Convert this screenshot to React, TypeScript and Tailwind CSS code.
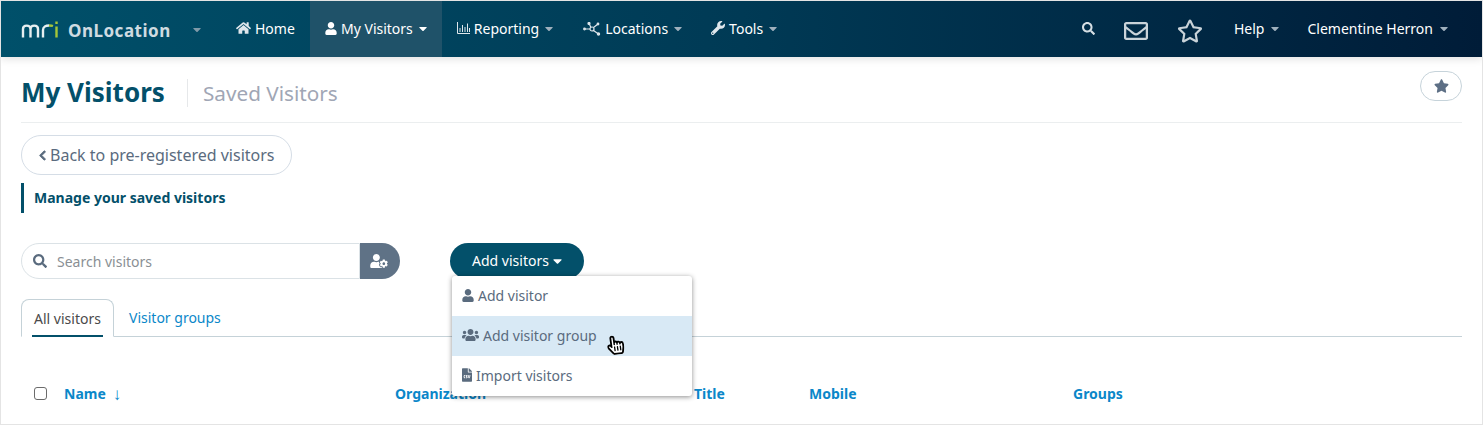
import { FaCaretDown, FaChevronLeft, FaFileCsv, FaHandPointer, FaHome, FaRegEnvelope, FaRegHandPointer, FaRegStar, FaSearch, FaStar, FaUser, FaUserCog, FaUsers, FaWrench } from "react-icons/fa";
import type { ReactNode } from "react";

function Caret({ className = "" }: { className?: string }) {
  return <FaCaretDown className={`h-[13px] w-[8px] ${className}`} />;
}

function MriLogo() {
  return (
    <svg width="38" height="17" viewBox="0 0 38 17" fill="none" strokeWidth="2.400">
      <path d="M2 16.500V8C2 3.500 9.500 3.500 9.500 8V16.500M9.500 8C9.500 3.500 17 3.500 17 8V16.500" stroke="#e6eef0" />
      <path d="M22 16.500V9C22 5.500 25 4.500 28 4.500" stroke="#e6eef0" />
      <path d="M28 4.500C30 4.500 31 4.600 32 5" stroke="#a4c639" />
      <path d="M35.500 5.500V16.500M35.500 .5V3" stroke="#a4c639" />
    </svg>
  );
}

function ChartIcon() {
  return (
    <svg width="13" height="12" viewBox="0 0 13 12" fill="none" stroke="#dfe7ec" strokeWidth="1">
      <path d="M.5 0v11.500H13" />
      <path d="M3 10V6M5.500 10V3M8 10V5M10.500 10V1.500M12.500 10V6" />
    </svg>
  );
}

function HubIcon() {
  return (
    <svg width="18" height="14" viewBox="0 0 18 14" fill="#dfe7ec" stroke="#dfe7ec" strokeWidth="1.200" className="mt-[1px]">
      <path d="M2 7h5M6 1.500l2 4M15 2l-4.500 3.500M15.500 12l-5-3.500" />
      <circle cx="1.500" cy="7" r=".8" />
      <circle cx="6" cy="1.500" r="1" />
      <circle cx="15" cy="2" r=".8" />
      <circle cx="15.500" cy="12" r="1.100" />
      <circle cx="9" cy="7" r="2" fill="none" />
    </svg>
  );
}

function NavItem({ icon, label, active }: { icon: ReactNode; label: string; active?: boolean }) {
  return (
    <div className={`flex h-full items-center gap-1 px-[15px] pb-[2px] text-[14px] text-white ${active ? "bg-[#1f5269]" : ""}`}>
      {icon}
      <span>{label}</span>
      <Caret className={active ? "ml-[2px] text-white" : "ml-[2px] text-[#9fb0bd]"} />
    </div>
  );
}

function MenuRow({ icon, label, active }: { icon: ReactNode; label: string; active?: boolean }) {
  return (
    <div className={`relative flex h-10 items-center gap-1 px-[10px] pb-[2px] text-[14px] text-[#5a6b7e] ${active ? "bg-[#d8e9f5]" : ""}`}>
      {icon}
      <span>{label}</span>
      {active && (
        <div className="absolute left-[155px] top-[19px] h-[20px] w-[17px] rotate-[-8deg]">
          <FaHandPointer className="absolute inset-0 h-[20px] w-[17px] text-white" />
          <FaRegHandPointer className="absolute inset-0 h-[20px] w-[17px] text-black" />
        </div>
      )}
    </div>
  );
}

export default function App() {
  return (
    <div className="h-[425px] w-[1483px] overflow-hidden border border-[#e4e4e4] bg-white font-['Noto_Sans',sans-serif]">
      <header className="relative z-10 flex h-[56px] items-center bg-gradient-to-r from-[#00506a] via-[#003a55] to-[#001c38] shadow-[0_2px_8px_rgba(0,0,0,0.12)]">
        <div className="flex h-full w-[234px] items-center pl-[20px]">
          <MriLogo />
          <span className="ml-[9px] mt-[4px] text-[17px] font-bold tracking-[0.5px] text-[#cfdbe1]">OnLocation</span>
          <Caret className="ml-[22px] text-[#7f9aa9]" />
        </div>
        <div className="flex h-full items-center">
          <div className="flex h-full w-[75px] items-center gap-1 pb-[2px] pl-[1px] text-[14px] text-white">
            <FaHome className="h-[14px] w-[15px] text-[#dfe7ec]" />
            <span>Home</span>
          </div>
          <NavItem active icon={<FaUser className="h-[13px] w-[12px] text-white" />} label="My Visitors" />
          <NavItem icon={<ChartIcon />} label="Reporting" />
          <NavItem icon={<HubIcon />} label="Locations" />
          <NavItem icon={<FaWrench className="-ml-[1px] h-[14px] w-[14px] text-[#dfe7ec]" />} label="Tools" />
        </div>
        <div className="ml-auto flex h-full items-center pb-[2px] pr-[34px]">
          <FaSearch className="h-[13px] w-[13px] text-[#d5dee3]" />
          <FaRegEnvelope className="ml-[29px] mt-[5px] h-[24px] w-[24px] text-[#c9d3d9]" />
          <FaRegStar className="ml-[29px] mt-[5px] h-[24px] w-[26px] text-[#c9d3d9]" />
          <span className="ml-[31px] text-[14px] text-white">Help</span>
          <Caret className="ml-[7px] text-[#9fb0bd]" />
          <span className="ml-[28px] text-[14px] text-white">Clementine Herron</span>
          <Caret className="ml-[7px] text-[#9fb0bd]" />
        </div>
      </header>

      <main className="px-[20px]">
        <div className="flex h-[66px] items-start justify-between border-b border-[#ebeeef] pt-[7px]">
          <div className="flex h-full items-center">
            <h1 className="mb-[2px] w-[166px] text-[26px] font-bold text-[#03506a]">My Visitors</h1>
            <h2 className="border-l border-[#e6e8ea] pl-[15px] text-[20.7px] leading-[28px] text-[#a0a6b5]">Saved Visitors</h2>
          </div>
          <button className="mt-[7px] flex h-[30px] w-[42px] items-center justify-center rounded-full border border-[#c6d3da] bg-white">
            <FaStar className="h-[14px] w-[15px] text-[#5d6f85]" />
          </button>
        </div>

        <button className="mt-[12px] flex h-[40px] w-[271px] items-center gap-[3px] rounded-full border border-[#d5dde6] pl-[16px] text-[16px] text-[#5a6b7e]">
          <FaChevronLeft className="h-[11px] w-[9px] stroke-[40px]" />
          Back to pre-registered visitors
        </button>

        <div className="mt-[8px] flex h-[30px] items-center border-l-[3px] border-[#03506a] pb-[2px] pl-[10px] text-[14px] font-bold text-[#03506a]">
          Manage your saved visitors
        </div>

        <div className="relative mt-[30px] flex items-center">
          <div className="flex h-[36px] w-[339px] items-center rounded-l-full border border-[#dbe2e6] pl-[11px] text-[14px] text-[#8a8f94]">
            <FaSearch className="h-[14px] w-[14px] text-[#5a6b7e]" />
            <span className="ml-[10px]">Search visitors</span>
          </div>
          <div className="flex h-[36px] w-[40px] items-center justify-center rounded-r-full bg-[#5f7286] pr-[3px]">
            <FaUserCog className="h-[14px] w-[18px] text-white" />
          </div>
          <button className="ml-[50px] flex h-[36px] w-[134px] items-center justify-center gap-[4px] rounded-full bg-[#03506a] pb-[1px] text-[14px] text-white">
            Add visitors
            <FaCaretDown className="h-[14px] w-[9px] text-white" />
          </button>

          <div className="absolute left-[431px] top-[33px] z-20 w-[240px] rounded-[3px] bg-white shadow-[0_1px_5px_rgba(0,0,0,0.45)]">
            <MenuRow icon={<FaUser className="h-[13px] w-[12px]" />} label="Add visitor" />
            <MenuRow active icon={<FaUsers className="h-[14px] w-[17px]" />} label="Add visitor group" />
            <MenuRow icon={<FaFileCsv className="h-[14px] w-[10px]" />} label="Import visitors" />
          </div>
        </div>

        <div className="mt-[20px] flex h-[38px] items-end border-b border-[#c5d2d8] text-[14px]">
          <div className="relative mb-[-1px] flex h-[38px] w-[93px] items-center justify-center rounded-t-[8px] border border-[#c5d2d8] border-b-white bg-white text-[#4a4a4a]">
            All visitors
            <div className="absolute bottom-[-1px] left-[10px] h-[2px] w-[71px] bg-[#03506a]" />
          </div>
          <div className="flex h-[38px] items-center pl-[15px] text-[#0a87c9]">Visitor groups</div>
        </div>

        <div className="mt-[46px] flex items-center text-[14px] font-bold text-[#0a87c9]">
          <div className="ml-[13px] h-[13px] w-[13px] rounded-[3px] border border-[#6b6b6b] bg-white" />
          <div className="ml-[17px] flex w-[331px] items-center gap-[7px]">
            Name <span className="text-[17px] font-normal leading-none">↓</span>
          </div>
          <div className="w-[299px]">Organization</div>
          <div className="w-[115px]">Title</div>
          <div className="w-[264px]">Mobile</div>
          <div>Groups</div>
        </div>
      </main>
    </div>
  );
}
